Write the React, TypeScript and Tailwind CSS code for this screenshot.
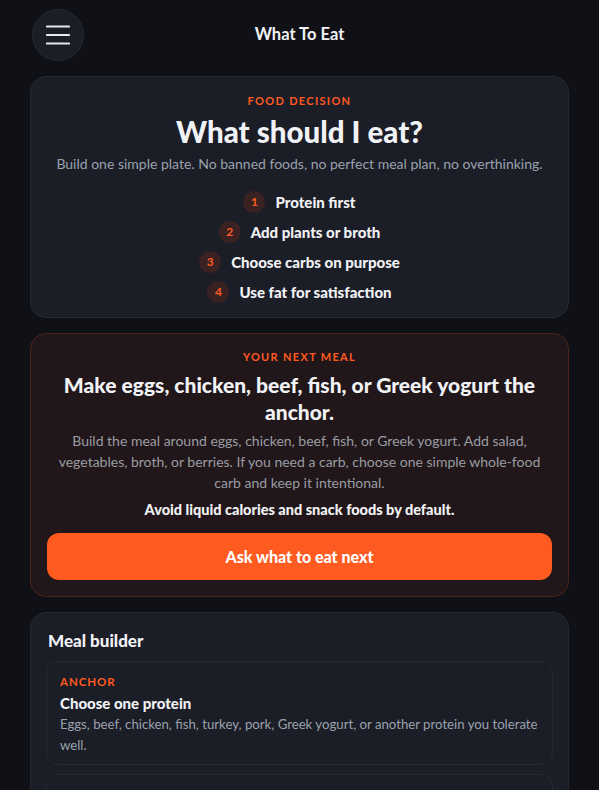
import React from 'react';

const steps = ['Protein first', 'Add plants or broth', 'Choose carbs on purpose', 'Use fat for satisfaction'];

const App: React.FC = () => {
  return (
    <div className="min-h-screen bg-[#101117] text-[#f1f2f5] font-['Segoe_UI','Lato',sans-serif]">
      <header className="relative flex h-[68px] items-center justify-center">
        <button className="absolute left-[32px] top-[9px] flex h-[52px] w-[52px] items-center justify-center rounded-full border border-[#262834] bg-[#1b1d27]">
          <svg width="24" height="20" viewBox="0 0 24 20" fill="none" stroke="#e8e9ee" strokeWidth="2.2" strokeLinecap="round">
            <path d="M1 1.5h22M1 10h22M1 18.5h22" />
          </svg>
        </button>
        <h1 className="text-[16.5px] font-bold">What To Eat</h1>
      </header>

      <main className="flex flex-col gap-[15px] px-[30px] pt-[8px]">
        <section className="rounded-[16px] border border-[#262834] bg-[#1b1d27] px-4 pt-[17px] pb-[14px] text-center">
          <p className="text-[11px] font-bold leading-[14px] tracking-[0.12em] text-[#ff5a1f]">FOOD DECISION</p>
          <h2 className="mt-[7px] text-[29.5px] font-black leading-[34px]">What should I eat?</h2>
          <p className="mt-[5px] text-[14px] leading-[20px] text-[#9aa2ad]">
            Build one simple plate. No banned foods, no perfect meal plan, no overthinking.
          </p>
          <ol className="mt-[17px] flex flex-col items-center gap-[8px]">
            {steps.map((s, i) => (
              <li key={s} className="flex h-[22px] items-center gap-[10px]">
                <span className="flex h-[22px] w-[22px] items-center justify-center rounded-full bg-[#3a2223] text-[12px] font-bold text-[#ff5a1f]">
                  {i + 1}
                </span>
                <span className="text-[15px] font-black">{s}</span>
              </li>
            ))}
          </ol>
        </section>

        <section className="rounded-[16px] border border-[#4a2418] bg-[#21171a] px-[16px] pt-[16px] pb-[16px] text-center">
          <p className="text-[11px] font-bold leading-[14px] tracking-[0.12em] text-[#ff5a1f]">YOUR NEXT MEAL</p>
          <h2 className="mt-[7px] text-[21px] font-black leading-[27px]">
            Make eggs, chicken, beef, fish, or Greek yogurt the anchor.
          </h2>
          <p className="mt-[5px] px-2 text-[14px] leading-[21px] text-[#9a9ca3]">
            Build the meal around eggs, chicken, beef, fish, or Greek yogurt. Add salad, vegetables, broth, or berries. If you
            need a carb, choose one simple whole-food carb and keep it intentional.
          </p>
          <p className="mt-[7px] text-[14.5px] font-black leading-[20px]">Avoid liquid calories and snack foods by default.</p>
          <button className="mt-[13px] h-[47px] w-full rounded-[12px] bg-[#ff5a1f] text-[16px] font-black text-white">
            Ask what to eat next
          </button>
        </section>

        <section className="rounded-[16px] border border-[#262834] bg-[#1b1d27] px-[15px] pt-[17px] pb-[16px]">
          <h3 className="pl-[2px] text-[17px] font-black leading-[22px]">Meal builder</h3>
          <div className="mt-[9px] flex flex-col gap-[9px]">
            <div className="rounded-[12px] border border-[#262834] px-[13px] pt-[13px] pb-[8px]">
              <p className="text-[11.5px] font-bold leading-[14px] tracking-[0.08em] text-[#ff5a1f]">ANCHOR</p>
              <p className="mt-[4px] text-[15px] font-black leading-[20px]">Choose one protein</p>
              <p className="mt-[1px] text-[13.2px] leading-[21px] text-[#9aa2ad]">
                Eggs, beef, chicken, fish, turkey, pork, Greek yogurt, or another protein you tolerate well.
              </p>
            </div>
            <div className="rounded-[12px] border border-[#262834] px-[13px] pt-[13px] pb-[8px]">
              <p className="text-[11.5px] font-bold leading-[14px] tracking-[0.08em] text-[#ff5a1f]">PLANTS</p>
              <p className="mt-[4px] text-[15px] font-black leading-[20px]">Add plants or broth</p>
              <p className="mt-[1px] text-[13.2px] leading-[21px] text-[#9aa2ad]">
                Salad, cooked vegetables, broth, or berries for volume and fiber.
              </p>
            </div>
          </div>
        </section>
      </main>
    </div>
  );
};

export default App;
